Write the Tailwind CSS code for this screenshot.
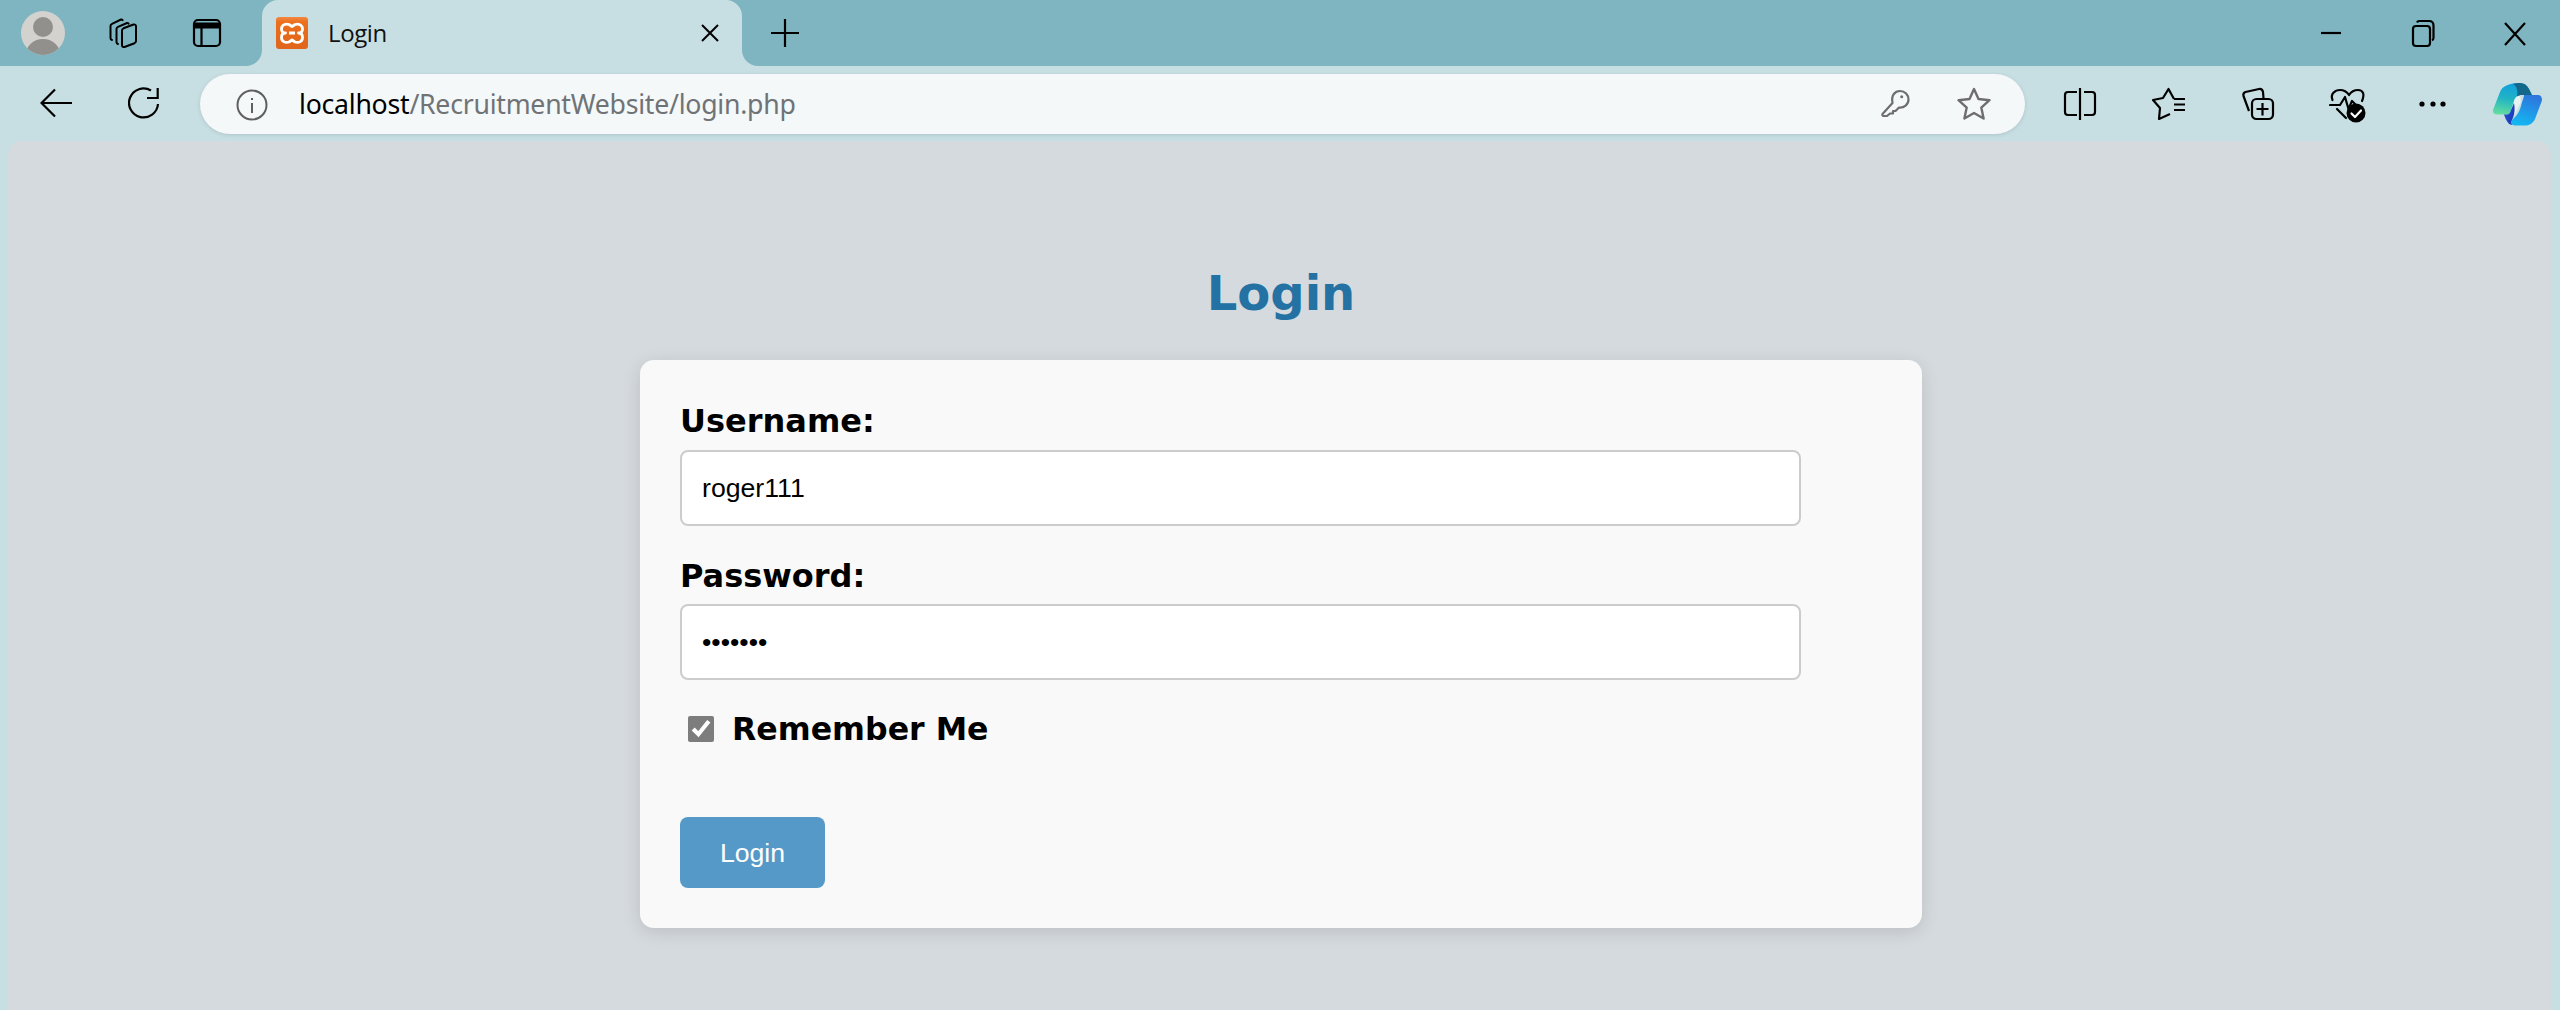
<!DOCTYPE html>
<html lang="en">
<head>
    <meta charset="UTF-8">
    <meta name="viewport" content="width=device-width, initial-scale=1.0">
    <title>Login</title>
    <script src="https://cdn.jsdelivr.net/npm/@tailwindcss/browser@4"></script>
</head>

<body class="h-[1010px] overflow-hidden bg-[#c7dfe3] flex flex-col font-['Noto_Sans',sans-serif]">

    <!-- Title bar -->
    <div class="h-[66px] shrink-0 bg-[#7fb5c0] flex items-center">
        <svg class="ml-[21px] shrink-0" width="44" height="44" viewBox="0 0 44 44">
            <defs><clipPath id="avatarClip"><circle cx="22" cy="22" r="22"/></clipPath></defs>
            <circle cx="22" cy="22" r="22" fill="#d3d2cf"/>
            <g clip-path="url(#avatarClip)" fill="#92908d">
                <circle cx="22" cy="16" r="10"/>
                <ellipse cx="22" cy="43" rx="17" ry="15"/>
            </g>
        </svg>
        <svg class="ml-[43px] shrink-0" width="32" height="32" viewBox="0 0 32 32" fill="none" stroke="#000" stroke-width="2" stroke-linejoin="round" stroke-linecap="round">
            <path d="M4 23c-1-.3-1.500-1-1.500-2V9c0-1 .6-1.800 1.500-2.200L13 2.500c.6-.2 1.200.1 1.600.6"/>
            <path d="M10 27c-1-.3-1.500-1-1.500-2V12c0-1 .6-1.800 1.500-2.200L19 6c.6-.2 1.200.1 1.600.6"/>
            <path d="M14 13.500c0-1 .6-1.800 1.500-2.200l10-3.800c1.300-.4 2.500.4 2.500 1.800V24c0 1-.6 1.800-1.500 2.200l-10 3.800c-1.300.4-2.500-.4-2.500-1.800z"/>
        </svg>
        <svg class="ml-[51px] shrink-0" width="32" height="32" viewBox="0 0 32 32" fill="none" stroke="#000" stroke-width="2.200">
            <rect x="3" y="3" width="26" height="26" rx="4"/>
            <path d="M3 8.500h26" stroke-width="6"/>
            <path d="M10.500 9v20"/>
        </svg>

        <!-- Active tab -->
        <div class="relative ml-[39px] w-[480px] h-[66px] shrink-0 bg-[#c7dfe3] rounded-t-[16px] flex items-center">
            <svg class="absolute left-[-16px] bottom-0" width="16" height="16" viewBox="0 0 16 16"><path d="M16 0V16H0A16 16 0 0 0 16 0Z" fill="#c7dfe3"/></svg>
            <svg class="absolute right-[-16px] bottom-0" width="16" height="16" viewBox="0 0 16 16"><path d="M0 0V16H16A16 16 0 0 1 0 0Z" fill="#c7dfe3"/></svg>
            <svg class="ml-[14px] shrink-0" width="32" height="32" viewBox="0 0 32 32" fill="none">
                <defs><linearGradient id="xamppBg" x1="0" y1="0" x2="0" y2="1"><stop offset="0" stop-color="#f28a42"/><stop offset="0.15" stop-color="#ec6f1e"/><stop offset="1" stop-color="#e0651a"/></linearGradient></defs>
                <rect width="32" height="32" rx="3" fill="url(#xamppBg)"/>
                <path d="M13 16H19M13 7.500C9 6.500 5.500 8 5.500 12 5.500 14.500 7 16 9.500 16 7 16 5.500 17.500 5.500 20.500 5.500 24.500 9 26 13 25L16 23 19 25C23 26 26.500 24.500 26.500 20.500 26.500 17.500 25 16 22.500 16 25 16 26.500 14.500 26.500 12 26.500 8 23 6.500 19 7.500L16 9.500Z" stroke="#fff" stroke-width="2.800" stroke-linejoin="round"/>
            </svg>
            <span class="ml-[20px] text-[24px] leading-none text-[#111] font-['Open_Sans',sans-serif] tracking-[-0.4px]">Login</span>
            <svg class="ml-auto mr-[22px] shrink-0" width="20" height="20" viewBox="0 0 20 20" stroke="#000" stroke-width="2"><path d="M2 2l16 16M18 2L2 18"/></svg>
        </div>

        <svg class="ml-[27px] shrink-0" width="32" height="32" viewBox="0 0 32 32" stroke="#000" stroke-width="2.200"><path d="M16 2v28M2 16h28"/></svg>

        <!-- Window controls -->
        <div class="ml-auto mr-[29px] flex items-center gap-[60px]">
            <svg width="32" height="32" viewBox="0 0 32 32" stroke="#000" stroke-width="2.200"><path d="M6 16h20"/></svg>
            <svg width="32" height="32" viewBox="0 0 32 32" fill="none" stroke="#000" stroke-width="2.200" stroke-linejoin="round">
                <rect x="6" y="9" width="17" height="20" rx="3"/>
                <path d="M10 5.500c.4-1 1.200-1.500 2.200-1.500H22c3 0 4.500 1.500 4.500 4.500V21c0 1-.5 1.800-1.500 2.200"/>
            </svg>
            <svg width="32" height="32" viewBox="0 0 32 32" stroke="#000" stroke-width="2.200"><path d="M6 6l20 22M26 6L6 28"/></svg>
        </div>
    </div>

    <!-- Toolbar -->
    <div class="h-[75px] shrink-0 flex items-start pt-[8px]">
        <svg class="ml-[40px] mt-[13px] shrink-0" width="32" height="32" viewBox="0 0 32 32" fill="none" stroke="#000" stroke-width="2.200"><path d="M32 16H1.500M15 2.500L1.500 16 15 29.500"/></svg>
        <svg class="ml-[56px] mt-[13px] shrink-0" width="34" height="34" viewBox="0 0 34 34" fill="none" stroke="#000" stroke-width="2.200"><path d="M30 17A14.500 14.500 0 1 1 23 3.500"/><path d="M29.700 1v10H19"/></svg>

        <!-- Address bar -->
        <div class="ml-[38px] w-[1825px] h-[60px] shrink-0 rounded-full bg-[#f4f8f9] shadow-[0_1px_4px_rgba(0,0,0,0.12)] flex items-center">
            <svg class="ml-[36px] mt-[2px] shrink-0" width="32" height="32" viewBox="0 0 32 32" fill="none" stroke="#5f5f5f" stroke-width="2"><circle cx="16" cy="16" r="14.500"/><path d="M16 14v10M16 9v2"/></svg>
            <div class="ml-[31px] text-[26.67px] leading-none whitespace-nowrap tracking-[-0.25px]"><span class="text-black">localhost</span><span class="text-[#6f7376]">/RecruitmentWebsite/login.php</span></div>
            <svg class="ml-auto shrink-0" width="30" height="32" viewBox="0 0 30 32" fill="none" stroke="#6e6e6e" stroke-width="2.200" stroke-linejoin="round"><path d="M12.500 15C11 7 15 3 20 3C25 3 28.500 7 28.500 11.500C28.500 16.500 24 20 19 19.500L15.500 23H13V25.500H10L7 28H3.500C2.500 28 2 27 2.500 26Z"/><circle cx="21.700" cy="8.700" r="1.500" fill="#6e6e6e" stroke="none"/></svg>
            <svg class="ml-[47px] mr-[34px] shrink-0" width="34" height="34" viewBox="0 0 34 34" fill="none" stroke="#6e6e6e" stroke-width="2.400" stroke-linejoin="round"><path d="M17 2l4.500 10 11 1.200-8.200 7.400 2.300 10.900L17 26l-9.600 5.500 2.300-10.900L1.500 13.200l11-1.200z"/></svg>
        </div>

        <svg class="ml-[35px] mt-[10px] shrink-0" width="40" height="40" viewBox="0 0 40 40" fill="none" stroke="#000" stroke-width="2.200"><path d="M20 4v32"/><path d="M17 8H8a3 3 0 0 0-3 3v17a3 3 0 0 0 3 3h9M24 8h8a3 3 0 0 1 3 3v17a3 3 0 0 1-3 3h-8"/></svg>
        <svg class="ml-[49px] mt-[10px] shrink-0" width="40" height="40" viewBox="0 0 40 40" fill="none" stroke="#000" stroke-width="2.200" stroke-linejoin="round"><path d="M25 15L19.500 5 14 14 4 16 11 24 10 35 21 30"/><path d="M25 15h11M25 20.500h11M25 26h11"/></svg>
        <svg class="ml-[47px] mt-[10px] shrink-0" width="40" height="40" viewBox="0 0 40 40" fill="none" stroke="#000" stroke-width="2.200" stroke-linejoin="round"><path d="M13 27L7.500 12C7 10 8 8.500 9.500 8L23 5C25 4.700 26.500 5.500 27 8L27.500 14"/><rect x="16" y="15" width="21" height="20" rx="4.500"/><path d="M26.500 19v12.500M20.500 25h12"/></svg>
        <svg class="ml-[53px] mt-[10px] shrink-0" width="40" height="40" viewBox="0 0 40 40" fill="none" stroke="#000" stroke-width="2.200" stroke-linejoin="round" stroke-linecap="round">
            <path d="M3.500 16C1 10 6 6 11 6C15 6 18 8 20 11C22 8 25 6 29 6C34 6 36 10 33 17"/>
            <path d="M1 21H11L16 13L19.500 25L23 17L26 20"/>
            <path d="M8 25l9 9"/>
            <circle cx="27" cy="29" r="9.500" fill="#000" stroke="none"/>
            <path d="M22.500 29.500l3.500 3.500 6-6.500" stroke="#fff"/>
        </svg>
        <svg class="ml-[44px] mt-[10px] shrink-0" width="40" height="40" viewBox="0 0 40 40" fill="#000"><circle cx="9" cy="20" r="2.600"/><circle cx="20" cy="20" r="2.600"/><circle cx="30" cy="20" r="2.600"/></svg>
        <svg class="ml-[40px] mt-[9px] shrink-0" width="49" height="43" viewBox="0 0 49 43">
            <defs>
                <linearGradient id="copilotA" x1="0.300" y1="1" x2="0.500" y2="0"><stop offset="0" stop-color="#62dca0"/><stop offset="0.5" stop-color="#20b4c4"/><stop offset="1" stop-color="#129ee0"/></linearGradient>
                <linearGradient id="copilotB" x1="0.700" y1="0" x2="0.400" y2="1"><stop offset="0" stop-color="#2f74dc"/><stop offset="1" stop-color="#14b6f2"/></linearGradient>
                <linearGradient id="copilotC" x1="0" y1="0" x2="1" y2="0.600"><stop offset="0" stop-color="#2a58d8"/><stop offset="1" stop-color="#1a38b8"/></linearGradient>
            </defs>
            <path d="M27 12h-3c-2 1-3 3-3.500 6L18 29l4 2 6-12z" fill="#e8f2f2"/>
            <path d="M27 0C17 0 9 3 7 9L0 27C-.5 30 1.500 31.500 4 31.500H14C16 31.500 17 30 18 27L21 18C22 14 25 12 29 12H39L36 6C34 2 31 0 27 0Z" fill="url(#copilotA)"/>
            <path d="M27 0C31 0 34 2 36 6L39 12H29C27 12 25.500 12.500 24 13.500C25 8 24 3 20 1C22 .3 24.500 0 27 0Z" fill="#13678a"/>
            <path d="M11 31.500H14C16 31.500 17 30 18 27L21 20C22 25 22 31 19 37C18 39.500 18 41 20 42C15 42 13 37 11 31.500Z" fill="url(#copilotC)"/>
            <path d="M31 12H45C48 12 49.500 15 48.800 18L42 36C40 40 37 42.500 32 42.500H22C18.500 42.500 18 39.500 19 37L21 35C25 31.500 27 27 28 23C29 18 31 15 31 12Z" fill="url(#copilotB)"/>
        </svg>
    </div>

    <!-- Page content -->
    <main class="flex-1 ml-[8px] w-[2543px] pl-[3px] bg-[#d5dade] rounded-t-[14px] flex flex-col items-center font-['DejaVu_Sans',sans-serif]">
        <h1 class="mt-[122px] mb-[37px] h-[60px] leading-[60px] text-[48px] font-bold text-[#2471a3]">Login</h1>

        <form class="w-[1282px] h-[568px] p-[40px] bg-[#f9f9f9] rounded-[14px] shadow-[0_4px_18px_rgba(0,0,0,0.12)]">
            <div class="mb-[28px]">
                <label class="block h-[50px] leading-[42px] text-[32px] font-bold text-black">Username:</label>
                <input type="text" value="roger111" class="block w-[1121px] h-[76px] px-[20px] bg-white border-2 border-[#cccccc] rounded-[8px] text-[26.67px] text-black font-['Liberation_Sans',sans-serif]">
            </div>
            <div class="mb-[28px]">
                <label class="block h-[50px] leading-[44px] text-[32px] font-bold text-black">Password:</label>
                <input type="password" value="1234567" class="block w-[1121px] h-[76px] px-[20px] bg-white border-2 border-[#cccccc] rounded-[8px] text-[26.67px] text-black font-['Liberation_Sans',sans-serif]">
            </div>
            <label class="h-[42px] flex items-center text-[31.6px] font-bold text-black">
                <input type="checkbox" checked class="ml-[8px] mr-[18px] w-[26px] h-[26px] accent-[#7d7d7d]">
                <span class="mt-[2px]">Remember Me</span>
            </label>
            <button type="button" class="block mt-[67px] w-[145px] h-[71px] bg-[#5499c7] rounded-[8px] text-[26.67px] text-white font-['Liberation_Sans',sans-serif]">Login</button>
        </form>
    </main>

</body>
</html>
